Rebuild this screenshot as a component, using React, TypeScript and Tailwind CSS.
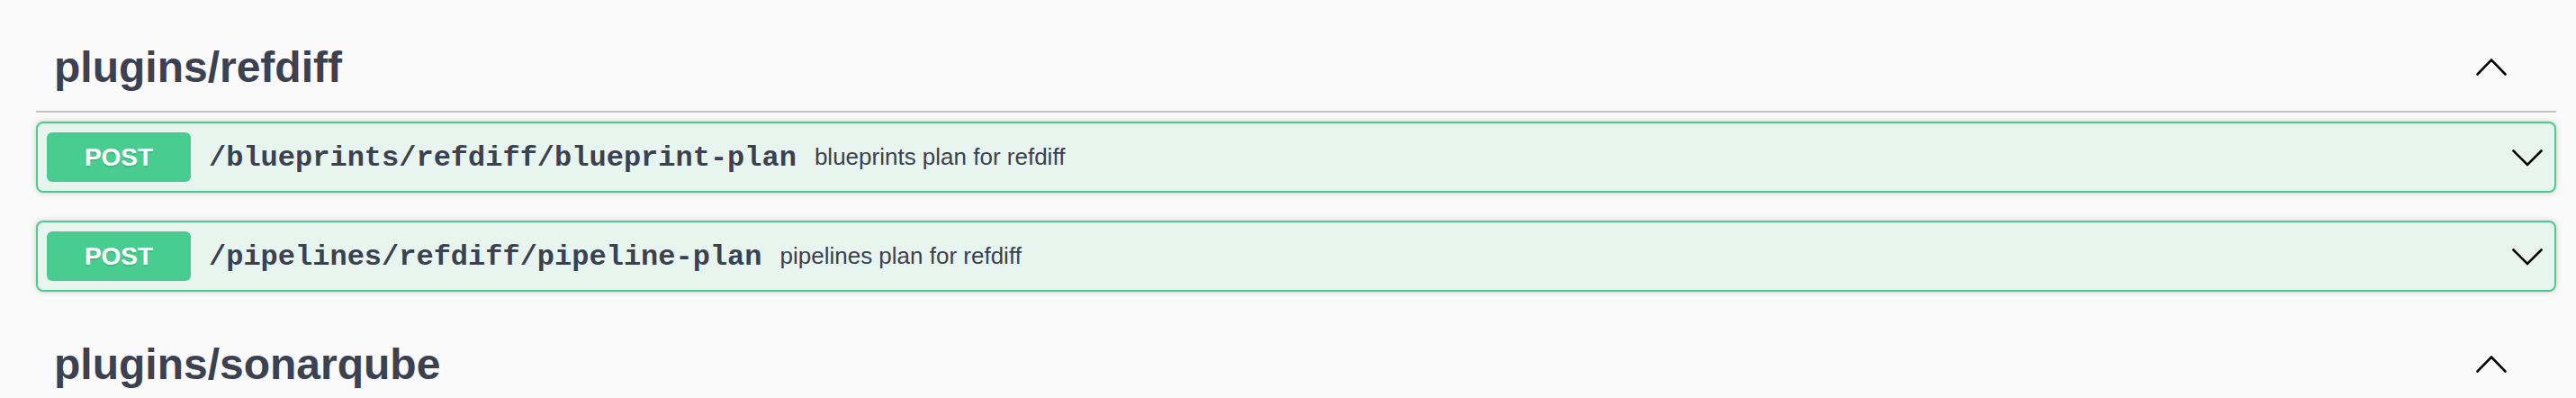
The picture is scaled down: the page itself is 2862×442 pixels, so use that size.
import React from "react";

const ChevronUp = () => (
  <svg width="40" height="40" viewBox="0 0 40 40" className="shrink-0">
    <polyline points="4.5,28.5 20,12.5 35.5,28.5" fill="none" stroke="#000" strokeWidth="2.6" strokeLinecap="round" strokeLinejoin="miter" />
  </svg>
);

const ChevronDown = () => (
  <svg width="40" height="40" viewBox="0 0 40 40" className="shrink-0">
    <polyline points="4.5,12.5 20,28 35.5,12.5" fill="none" stroke="#000" strokeWidth="2.6" strokeLinecap="round" strokeLinejoin="miter" />
  </svg>
);

const Op = ({ path, desc }: { path: string; desc: string }) => (
  <div className="mb-[31px] flex h-[79px] items-center rounded-[8px] border-2 border-[#49cc90] bg-[#e8f5ef] px-[10px] shadow-[0_0_6px_rgba(0,0,0,0.19)]">
    <div className="flex h-[55px] w-[160px] shrink-0 items-center justify-center rounded-[6px] bg-[#49cc90] font-['Liberation_Sans',Arial,sans-serif] text-[28px] font-bold text-white [text-shadow:0_2px_0_rgba(0,0,0,0.1)]">
      POST
    </div>
    <span className="px-[20px] pt-[2px] font-['Liberation_Mono','Courier_New',monospace] text-[32px] font-bold text-[#3b4151]">
      {path}
    </span>
    <span className="font-['Liberation_Sans',Arial,sans-serif] text-[26px] text-[#3b4151]">{desc}</span>
    <div className="ml-auto">
      <ChevronDown />
    </div>
  </div>
);

const Tag = ({ name }: { name: string }) => (
  <div className="mb-[10px] flex h-[100px] items-center justify-between border-b-2 border-[#c1c3c7] pl-[20px] pr-[52px]">
    <h3 className="font-['Liberation_Sans',Arial,sans-serif] text-[48px] font-bold leading-[55px] text-[#3b4151]">{name}</h3>
    <ChevronUp />
  </div>
);

export default function App() {
  return (
    <div className="h-[442px] w-[2862px] overflow-hidden bg-[#fafafa] pl-[40px] pt-[25px]">
      <div className="w-[2800px]">
        <Tag name="plugins/refdiff" />
        <Op path="/blueprints/refdiff/blueprint-plan" desc="blueprints plan for refdiff" />
        <Op path="/pipelines/refdiff/pipeline-plan" desc="pipelines plan for refdiff" />
        <Tag name="plugins/sonarqube" />
      </div>
    </div>
  );
}
